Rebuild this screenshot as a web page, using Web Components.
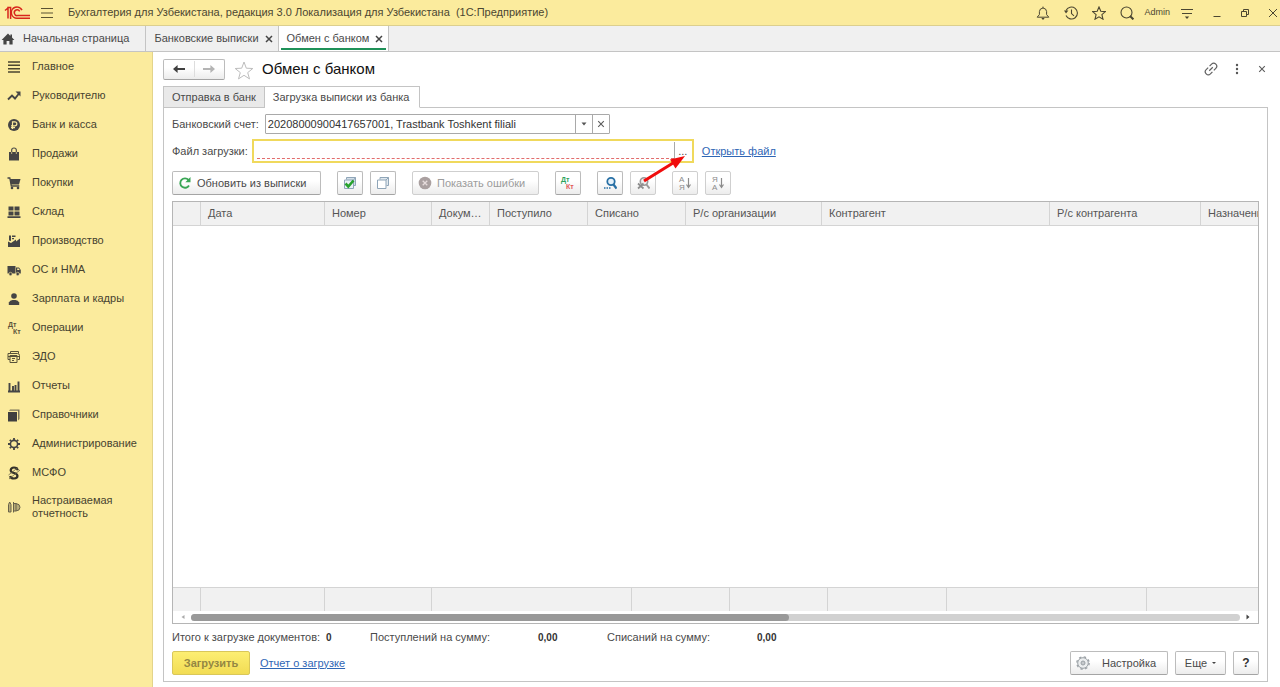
<!DOCTYPE html>
<html lang="ru">
<head>
<meta charset="utf-8">
<title>Обмен с банком</title>
<style>
  html, body { margin: 0; height: 100%; }
  body {
    font: 11px/13px "Liberation Sans", Arial, sans-serif;
    color: #4a4a4a;
    background: #fff;
    --yellow: #fbeb9d;
    --line: #c4c4c4;
    --link: #2f66b5;
  }
</style>
</head>
<body>
<bank-app></bank-app>

<script>
const ICONS = {
  logo: [26, 16, `<g fill="none" stroke="#d8261c" stroke-width="1.5"><path d="M1 5.5L4 3v10.5M3.2 2.5H6.6V14"/><path d="M18 5.2A5.6 5.6 0 1 0 13.5 13.2H26"/><path d="M15.7 6.3A2.9 2.9 0 1 0 13.5 10.6H26"/></g>`],
  burger: [14, 14, `<path d="M1 2.5h12M1 7h12M1 11.5h12" stroke="#5a5233" stroke-width="1.2"/>`],
  bell: [14, 14, `<path d="M1.2 11.2h11.6L10.6 8.6V5.5Q10.4 2.4 7 2 3.6 2.4 3.4 5.5v3.1z" fill="none" stroke="#4b4631" stroke-linejoin="round"/><path d="M7 .6V2" stroke="#4b4631"/><path d="M5.3 12h3.4L7 14z" fill="#4b4631"/>`],
  history: [14, 14, `<path d="M2 4.5A6 6 0 1 1 2 9.6" fill="none" stroke="#4b4631" stroke-width="1.1"/><path d="M0 4.5h4.4L2 7.6z" fill="#4b4631"/><path d="M7.5 3.4V7.6L10 9.8" fill="none" stroke="#4b4631" stroke-width="1.1"/>`],
  star: [14, 14, `<path d="M7 1l1.8 4.3 4.6.3-3.5 3 1.1 4.6L7 10.8l-4 2.4 1.1-4.6-3.5-3 4.6-.3z" fill="none" stroke="#4b4631" stroke-width="1.1"/>`],
  search: [14, 14, `<circle cx="6.5" cy="6.5" r="5.5" fill="none" stroke="#4b4631" stroke-width="1.1"/><path d="M10 10l3.4 3.4" stroke="#4b4631" stroke-width="2"/>`],
  settings: [14, 14, `<path d="M1 3.5h12M2 7.5h10" stroke="#4b4631" stroke-width="1.2"/><path d="M4.8 10.5h4.4L7 13z" fill="#4b4631"/>`],
  minimize: [10, 10, `<path d="M1.5 8.5h7" stroke="#4b4631"/>`],
  restore: [10, 10, `<path d="M1.5 3.5h5v5h-5zM3.5 3.5v-2h5v5h-2" fill="none" stroke="#4b4631"/>`],
  close: [10, 10, `<path d="M1 1l8 8M9 1L1 9" stroke="#4b4631"/>`],
  cross: [8, 8, `<path d="M1 1l6 6M7 1L1 7" stroke="#454545" stroke-width="1.5"/>`],
  thin: [8, 8, `<path d="M1.2 1.2l5.6 5.6M6.8 1.2L1.2 6.8" stroke="#5c5c5c" stroke-width="1.1"/>`],
  home: [14, 14, `<path d="M7 1.5L.6 8h1.8v4.6h3.2V9h2.8v3.6h3.2V8h1.8L11 5.6V2.4H9.4V4z" fill="#454545"/>`],
  back: [14, 10, `<path d="M1 5l4.6-4v2.9H13v2.2H5.6V9z" fill="#404040"/>`],
  forward: [14, 10, `<path d="M13 5L8.4 1v3.1H1v1.8h7.4V9z" fill="#b4b4b4"/>`],
  favorite: [20, 20, `<path d="M10 1l2.3 6.200 6.500.3-5.100 4.100 1.800 6.300L10 14.300l-5.500 3.600 1.800-6.300-5.100-4.100 6.500-.3z" fill="#fff" stroke="#bdbdbd"/>`],
  link: [14, 14, `<g transform="rotate(-45 7 7)" fill="none" stroke="#606060" stroke-width="1.2"><path d="M6 4H3.200a3 3 0 0 0 0 6H6M8 4h2.800a3 3 0 0 1 0 6H8M4.500 7h5"/></g>`],
  dots: [4, 12, `<circle cx="2" cy="2" r="1.2" fill="#555"/><circle cx="2" cy="6" r="1.2" fill="#555"/><circle cx="2" cy="10" r="1.2" fill="#555"/>`],
  down: [6, 4, `<path d="M.5.5h5L3 3.500z" fill="#555"/>`],
  downsmall: [4, 4, `<path d="M0 1h4L2 3z" fill="#444"/>`],
  left: [4, 6, `<path d="M3.500 1v4L.5 3z" fill="#aaa"/>`],
  right: [4, 6, `<path d="M.5.5v5L3.500 3z" fill="#444"/>`],

  main: [14, 14, `<path d="M1 2h12M1 5.300h12M1 8.700h12M1 12h12" stroke="#4b4631" stroke-width="1.6"/>`],
  chart: [14, 14, `<path d="M1 10.500L5 6.500l3 3 4-5" fill="none" stroke="#454545" stroke-width="1.9"/><path d="M8.500 2.500H13.500V7.500z" fill="#454545"/>`],
  ruble: [14, 14, `<circle cx="7" cy="7" r="6" fill="#454545"/><path d="M5.500 11V3.800h2.300a2 2 0 0 1 0 4.100H4M4 9.700h4" fill="none" stroke="#fbeb9d" stroke-width="1.2"/>`],
  bag: [14, 14, `<path d="M2 5h10v8.500H2z" fill="#454545"/><path d="M4.700 7V3Q4.700 1 7 1t2.300 2v4" fill="none" stroke="#454545" stroke-width="1.1"/><path d="M4.700 5v2M9.300 5v2" stroke="#fbeb9d" stroke-width=".7"/>`],
  cart: [14, 14, `<path d="M.5 2h2.300l1.500 8h8" fill="none" stroke="#454545" stroke-width="1.3"/><path d="M3 3h10.500L12 8.500H4z" fill="#454545"/><circle cx="5" cy="12" r="1.3" fill="#454545"/><circle cx="11" cy="12" r="1.3" fill="#454545"/>`],
  stock: [14, 14, `<path d="M1.500 1.500h5v4h-5zM7.500 1.500h5v4h-5zM1.500 6.500h5v4h-5zM7.500 6.500h5v4h-5zM.5 11.300h13v1.700H.5z" fill="#454545"/>`],
  factory: [14, 14, `<path d="M1 13V7.500l3 1.500L9 5.500v2L13 4.500V13z" fill="#454545"/><path d="M2 6.500V1.500h2V7zM5 1.500h3.500V3H5zM5 4h2v1.300H5z" fill="#454545"/>`],
  truck: [14, 14, `<path d="M.5 3h8v7.500h-8zM9 4.500h3L13.800 7v3.500H9z" fill="#454545"/><path d="M10.200 5.500h1.500l1 1.500h-2.500z" fill="#fbeb9d"/><circle cx="3.500" cy="11" r="1.700" fill="#454545" stroke="#fbeb9d" stroke-width=".6"/><circle cx="10.700" cy="11" r="1.700" fill="#454545" stroke="#fbeb9d" stroke-width=".6"/>`],
  person: [14, 14, `<circle cx="7" cy="4" r="2.800" fill="#454545"/><path d="M1.800 13V10.500Q3 8.300 5.500 8h3q2.500.300 3.700 2.500V13z" fill="#454545"/>`],
  dtkt: [16, 14, `<g font-family="Liberation Sans, sans-serif" font-weight="700" font-size="7" fill="#5b553c"><text x="1" y="6">Дт</text><text x="6" y="13">Кт</text></g>`],
  edo: [14, 14, `<g fill="none" stroke="#58523a"><path d="M3.500 3.500v-2h8v2M1 3.500h9.500q2 0 2 2V9.500h-2"/><path d="M3 5.500v7h7v-7zM1 3.500v6h2M1 6.500h12"/></g><path d="M5 8.500h3M5 10.500h2" stroke="#58523a"/>`],
  report: [14, 14, `<path d="M1 12.500h12M2.500 4v8M6 7v5M8.500 6v6M11.500 2.500V12" stroke="#454545" stroke-width="1.9"/>`],
  books: [14, 14, `<path d="M1 4h9v9.500H1z" fill="#3f3f3f"/><path d="M2 2.800l1-1.300h9.500V11L11 12.500V2.800z" fill="#7b755b"/>`],
  gear: [14, 14, `<circle cx="7" cy="7" r="3.600" fill="none" stroke="#454545" stroke-width="1.6"/><path d="M7 1v2M7 11v2M1 7h2M11 7h2M2.800 2.800L4.200 4.200M9.800 9.800l1.400 1.400M2.800 11.200l1.400-1.400M9.800 4.200l1.400-1.400" stroke="#454545" stroke-width="1.8"/>`],
  msfo: [14, 14, `<path d="M10.800 4.200Q10 1.500 7 1.500T3.700 4.200Q3.700 6.300 7 7t3.500 2.800Q10.500 12.500 7 12.500T3.200 10" fill="none" stroke="#33312a" stroke-width="2.2"/><path d="M2 13L13 4M1.500 9L11 1.500" stroke="#6a6449" stroke-width=".8"/>`],
  custom: [14, 14, `<g fill="#b9ad78" stroke="#68624a"><path d="M1.500 12V4.500L2.700 2 4 4.500V12zM6.500 2v10.500M6.500 3.500H9v7.500H6.500M9 3.500q4 .5 4 3.800T9 11"/></g>`],

  refresh: [14, 14, `<path d="M11 9.500A4.700 4.700 0 1 1 10.500 4" fill="none" stroke="#3aa655" stroke-width="1.9"/><path d="M12.500 1v5.200H7.300z" fill="#3aa655"/>`],
  checkall: [14, 14, `<path d="M3.500 3.500v-2h9v8h-2" fill="#d3dfe8" stroke="#8fa5b8"/><path d="M1.500 4h9v8.500h-9z" fill="#eaf1f6" stroke="#8fa5b8"/><path d="M10.500 4l2-2.500" stroke="#8fa5b8"/><path d="M2.500 7.500l2.800 3L10.500 4.500" fill="none" stroke="#27a22d" stroke-width="2.6"/>`],
  uncheck: [14, 14, `<path d="M4 3.500V1.500h8.500v8H10.500" fill="#e0e8ee" stroke="#8fa5b8"/><path d="M1.500 4h8.500v8.500H1.500z" fill="#fff" stroke="#8fa5b8"/><path d="M10 4l2.500-2.500" stroke="#8fa5b8"/>`],
  errors: [14, 14, `<circle cx="7" cy="7" r="6.300" fill="#aaa0a0"/><path d="M4.700 4.700l4.600 4.600M9.300 4.700L4.700 9.300" stroke="#e6dcdc" stroke-width="1.3"/>`],
  dtktcolor: [16, 14, `<g font-family="Liberation Sans, sans-serif" font-weight="700" font-size="7"><text x="1" y="6" fill="#2da25c">Дт</text><text x="6" y="13" fill="#e25757">Кт</text></g>`],
  find: [14, 14, `<circle cx="8" cy="5.500" r="3.700" fill="#e5f1fa" stroke="#2870a5" stroke-width="1.8"/><path d="M10.500 8.500l3 4" stroke="#2870a5" stroke-width="2.2"/><path d="M1 12h1.500M3.500 12H5M6 12h1.500" stroke="#2870a5" stroke-width="1.5"/>`],
  unfind: [14, 14, `<circle cx="8" cy="5.500" r="3.700" fill="#eee" stroke="#999" stroke-width="1.6"/><path d="M10.500 8.500l3 4" stroke="#999" stroke-width="2"/><path d="M2 7.500l5.500 5M7.500 7.500L2 12.500" stroke="#8d8d8d" stroke-width="1.7"/>`],
  sortasc: [14, 16, `<g font-family="Liberation Sans, sans-serif" font-size="8" fill="#8b8b8b"><text x="1" y="7">А</text><text x="1" y="15">Я</text></g><path d="M10.500 3v9M8.500 9.500l2 3 2-3" fill="none" stroke="#8b8b8b" stroke-width="1.2"/>`],
  sortdesc: [14, 16, `<g font-family="Liberation Sans, sans-serif" font-size="8" fill="#8b8b8b"><text x="1" y="7">Я</text><text x="1" y="15">А</text></g><path d="M10.500 3v9M8.500 9.500l2 3 2-3" fill="none" stroke="#8b8b8b" stroke-width="1.2"/>`],
  cog: [14, 14, `<circle cx="7" cy="7" r="5.300" fill="#eceeef" stroke="#9aa0a5"/><circle cx="7" cy="7" r="6.200" fill="none" stroke="#9aa0a5" stroke-width="1.3" stroke-dasharray="2.4 2.47"/><circle cx="7" cy="7" r="2" fill="#c6c9cc" stroke="#9aa0a5"/>`],
  arrow: [44, 30, `<path d="M2 27L31 9" stroke="#f00c0c" stroke-width="3"/><path d="M43 2L28 5.500l5.500 9z" fill="#f00c0c"/>`]
};

class Base extends HTMLElement {
  connectedCallback() {
    if (this.shadowRoot) return;
    this.attachShadow({ mode: "open" }).innerHTML =
      `<style>*{box-sizing:border-box}:host{box-sizing:border-box}button,input{font:inherit;color:inherit;margin:0}a{color:inherit}${this.css()}</style>${this.html()}`;
  }
  attr(name, fallback = "") { return this.getAttribute(name) ?? fallback; }
}
const define = (name, css, html) =>
  customElements.define(name, class extends Base {
    css() { return css; }
    html() { return html(this); }
  });

define("ui-icon", `:host{display:block;flex:none}svg{display:block}`, el => {
  const [w, h, body] = ICONS[el.attr("name")];
  return `<svg width="${w}" height="${h}" viewBox="0 0 ${w} ${h}" aria-hidden="true">${body}</svg>`;
});

define("icon-button", `
  :host{display:block;flex:none}
  button{display:grid;place-items:center;width:100%;height:16px;padding:0;border:0;background:none}
`, el => `<button type="button" aria-label="${el.attr("label")}"><ui-icon name="${el.attr("icon")}"></ui-icon></button>`);

define("tool-button", `
  :host{display:block;flex:none}
  button{display:flex;align-items:center;justify-content:center;gap:5px;width:100%;height:24px;padding:0 8px;
    border:1px solid #bcbcbc;border-bottom-color:#a4a4a4;border-radius:2px;background:linear-gradient(#fff 40%,#ececec);
    color:#4a4a4a;white-space:nowrap}
  :host([icon]) button{padding:0 4px}
  :host([text]) button{justify-content:flex-start;padding:0 4px 0 5px}
  :host([spread]) button{gap:12px}
  :host([muted]) button{color:#9c9c9c;border-color:#cfcfcf}
  :host([primary]) button{font-weight:700;color:#948743;border-color:#d9c75a;background:linear-gradient(#fdee72,#f2dc54)}
`, el => {
  const label = el.hasAttribute("label") ? ` aria-label="${el.attr("label")}"` : "";
  const icon = el.hasAttribute("icon") ? `<ui-icon name="${el.attr("icon")}"></ui-icon>` : "";
  return `<button type="button"${label}${el.hasAttribute("muted") ? " disabled" : ""}>${icon}<slot></slot></button>`;
});

define("app-header", `
  :host{display:flex;align-items:center;height:26px;padding:0 2px 0 4px;background:var(--yellow);border-bottom:1px solid #dccf8e;color:#4b4631}
  .burger{width:14px;margin:0 14px 0 10px}
  h1{flex:1;margin:0;font:inherit;white-space:pre;overflow:hidden}
  .tools{display:flex;align-items:center;gap:14px}
  .tools icon-button{width:14px}
  .user{font-size:9px;margin:0 -4px}
  .win{display:flex;gap:18px;margin-left:18px}
  .win icon-button{width:10px}
`, () => `
  <ui-icon name="logo"></ui-icon>
  <icon-button class="burger" icon="burger" label="Меню"></icon-button>
  <h1>Бухгалтерия для Узбекистана, редакция 3.0 Локализация для Узбекистана  (1С:Предприятие)</h1>
  <div class="tools">
    <icon-button icon="bell" label="Уведомления"></icon-button>
    <icon-button icon="history" label="История"></icon-button>
    <icon-button icon="star" label="Избранное"></icon-button>
    <icon-button icon="search" label="Поиск"></icon-button>
    <span class="user">Admin</span>
    <icon-button icon="settings" label="Настройки"></icon-button>
  </div>
  <div class="win">
    <icon-button icon="minimize" label="Свернуть"></icon-button>
    <icon-button icon="restore" label="Восстановить"></icon-button>
    <icon-button icon="close" label="Закрыть"></icon-button>
  </div>`);

define("window-tab", `
  :host{display:flex;align-items:center;gap:6px;padding:0 5px 0 8px;border-right:1px solid var(--line);white-space:nowrap}
  :host([home]){gap:8px;padding:0 16px 0 1px}
  :host([active]){position:relative;background:#fff}
  :host([active])::after{content:"";position:absolute;left:2px;right:2px;bottom:1px;height:2px;background:#1f9158}
  a{text-decoration:none}
  icon-button{width:8px}
`, el => `${el.hasAttribute("home") ? `<ui-icon name="home"></ui-icon>` : ""}<a href="#"><slot></slot></a>${el.hasAttribute("home") ? "" : `<icon-button icon="cross" label="Закрыть вкладку"></icon-button>`}`);

define("window-tabs", `
  :host{display:flex;height:26px;background:#f0f0f0;border-bottom:1px solid var(--line)}
`, () => `
  <window-tab home>Начальная страница</window-tab>
  <window-tab>Банковские выписки</window-tab>
  <window-tab active>Обмен с банком</window-tab>`);

define("nav-item", `
  :host{display:block}
  a{display:flex;align-items:center;gap:10px;min-height:29px;padding:0 16px 0 7px;text-decoration:none;color:#474330}
  :host([tall]) a{min-height:40px}
  ui-icon{width:15px}
`, el => `<a href="#"><ui-icon name="${el.attr("icon")}"></ui-icon><span><slot></slot></span></a>`);

define("nav-menu", `
  :host{display:block;background:var(--yellow);border-right:1px solid #e3d48b}
`, () => `<nav>${[
  ["main", "Главное"], ["chart", "Руководителю"], ["ruble", "Банк и касса"], ["bag", "Продажи"],
  ["cart", "Покупки"], ["stock", "Склад"], ["factory", "Производство"], ["truck", "ОС и НМА"],
  ["person", "Зарплата и кадры"], ["dtkt", "Операции"], ["edo", "ЭДО"], ["report", "Отчеты"],
  ["books", "Справочники"], ["gear", "Администрирование"], ["msfo", "МСФО"]
].map(([i, t]) => `<nav-item icon="${i}">${t}</nav-item>`).join("")}<nav-item tall icon="custom">Настраиваемая отчетность</nav-item></nav>`);

define("form-head", `
  :host{display:flex;align-items:center;height:34px}
  .nav{display:flex;width:62px;height:21px;border:1px solid #bcbcbc;border-bottom-color:#a4a4a4;border-radius:2px;background:linear-gradient(#fff 40%,#ececec)}
  .nav icon-button{flex:1;align-self:center}
  .nav icon-button + icon-button{border-left:1px solid #ddd}
  .fav{width:20px;margin:0 8px 0 9px}
  h2{flex:1;margin:0;font-size:15px;line-height:20px;font-weight:400;color:#111}
  .end{display:flex;gap:13px;align-items:center}
  .end icon-button{width:12px}
  .end .link{width:14px}
`, () => `
  <div class="nav"><icon-button icon="back" label="Назад"></icon-button><icon-button icon="forward" label="Вперед"></icon-button></div>
  <icon-button class="fav" icon="favorite" label="В избранное"></icon-button>
  <h2>Обмен с банком</h2>
  <div class="end">
    <icon-button class="link" icon="link" label="Ссылка"></icon-button>
    <icon-button icon="dots" label="Еще"></icon-button>
    <icon-button icon="thin" label="Закрыть"></icon-button>
  </div>`);

define("page-tabs", `
  :host{display:flex;position:relative;margin-bottom:-1px}
  button{height:22px;padding:0 8px;border:1px solid var(--line);border-radius:0;background:#e9e9e9}
  button + button{padding-right:10px;border-left:0;border-bottom-color:#fff;background:#fff}
`, () => `<button type="button">Отправка в банк</button><button type="button">Загрузка выписки из банка</button>`);

define("account-field", `
  :host{display:flex;align-items:center;gap:6px}
  .box{display:flex;width:345px;height:20px;border:1px solid #a9a9a9;border-radius:1px}
  input{flex:1;min-width:0;padding:0 2px;border:0;color:#333;background:none}
  icon-button{width:17px;border-left:1px solid #a9a9a9;display:grid;align-items:center}
`, () => `
  <label for="account">Банковский счет:</label>
  <div class="box">
    <input id="account" value="20208000900417657001, Trastbank Toshkent filiali">
    <icon-button icon="down" label="Выбрать"></icon-button>
    <icon-button icon="thin" label="Очистить"></icon-button>
  </div>`);

define("file-field", `
  :host{display:flex;align-items:center;gap:4px}
  .box{position:relative;display:flex;width:442px;height:24px;padding:1px;border:2px solid #f0d95c}
  .line{flex:1;display:flex;margin:0 0 1px 2px;border-bottom:1px dashed #e26d6d}
  input{flex:1;min-width:0;padding:0;border:0;background:none;outline:0}
  button{width:17px;padding:0;border:0;border-left:1px solid #a9a9a9;background:none}
  .pointer{position:absolute;right:6px;top:13px}
  a{margin-left:4px;color:var(--link)}
`, () => `
  <label for="file">Файл загрузки:</label>
  <div class="box">
    <span class="line"><input id="file"></span>
    <button type="button" aria-label="Выбрать файл">...</button>
    <ui-icon class="pointer" name="arrow"></ui-icon>
  </div>
  <a href="#">Открыть файл</a>`);

define("tool-bar", `
  :host{display:flex;gap:16px}
  div{display:flex;gap:7px}
  tool-button{width:26px}
  .refresh{width:149px}
  .errors{width:127px}
`, () => `
  <tool-button class="refresh" text icon="refresh">Обновить из выписки</tool-button>
  <div><tool-button icon="checkall" label="Установить флажки"></tool-button><tool-button icon="uncheck" label="Снять флажки"></tool-button></div>
  <tool-button class="errors" text muted icon="errors">Показать ошибки</tool-button>
  <tool-button icon="dtktcolor" label="Проводки"></tool-button>
  <div><tool-button icon="find" label="Найти"></tool-button><tool-button muted icon="unfind" label="Отменить поиск"></tool-button></div>
  <div><tool-button muted icon="sortasc" label="По возрастанию"></tool-button><tool-button muted icon="sortdesc" label="По убыванию"></tool-button></div>`);

define("statement-table", `
  :host{display:flex;flex-direction:column;border:1px solid #b5b5b5;overflow:hidden}
  table{flex:1;display:flex;flex-direction:column}
  tbody{flex:1}
  thead,tbody,tfoot{display:block}
  tr{display:grid;background:#f1f1f1}
  thead tr{grid-template-columns:28px 124px 107px 58px 98px 98px 136px 228px 151px minmax(0,1fr);height:24px;border-bottom:1px solid #d4d4d4}
  tfoot tr{grid-template-columns:28px 124px 107px 200px 98px 98px 119px 200px minmax(0,1fr);height:24px;border-top:1px solid #d4d4d4}
  th,td{display:block;padding:0;border-right:1px solid #d4d4d4}
  th{padding:0 6px 0 7px;font-weight:400;line-height:22px;text-align:left;white-space:nowrap;overflow:hidden;text-overflow:ellipsis;color:#555}
  th:last-child,td:last-child{border-right:0;text-overflow:clip;padding-right:0}
  .scroll{display:flex;align-items:center;gap:6px;height:12px;padding:0 8px}
  .track{flex:1;height:7px;border-radius:4px;background:#d1d1d1}
  .thumb{width:57%;height:7px;border-radius:4px;background:#999}
`, () => `
  <table>
    <thead><tr>${["", "Дата", "Номер", "Документ", "Поступило", "Списано", "Р/с организации", "Контрагент", "Р/с контрагента", "Назначение платежа"].map(t => `<th scope="col">${t}</th>`).join("")}</tr></thead>
    <tbody></tbody>
    <tfoot><tr>${"<td></td>".repeat(9)}</tr></tfoot>
  </table>
  <div class="scroll"><ui-icon name="left"></ui-icon><div class="track"><div class="thumb"></div></div><ui-icon name="right"></ui-icon></div>`);

define("total-row", `
  :host{display:flex}
  p{display:flex;gap:6px;margin:0;flex:none}
  .count{width:198px}
  .income{width:237px}
  .income span{width:162px}
  .expense span{width:144px}
  b{font-size:10px;color:#333}
`, () => `
  <p class="count"><span>Итого к загрузке документов:</span><b>0</b></p>
  <p class="income"><span>Поступлений на сумму:</span><b>0,00</b></p>
  <p class="expense"><span>Списаний на сумму:</span><b>0,00</b></p>`);

define("form-footer", `
  :host{display:flex;align-items:center;gap:7px}
  a{margin:0 auto 0 3px;color:var(--link)}
  .load{width:78px}.setup{width:98px}.more{width:51px}.help{width:26px}
  b{font-size:12px;color:#333}
`, () => `
  <tool-button class="load" primary>Загрузить</tool-button>
  <a href="#">Отчет о загрузке</a>
  <tool-button class="setup" text spread icon="cog">Настройка</tool-button>
  <tool-button class="more">Еще <ui-icon name="downsmall"></ui-icon></tool-button>
  <tool-button class="help"><b>?</b></tool-button>`);

define("bank-form", `
  :host{display:flex;flex-direction:column;min-width:0;padding:0 12px 5px 10px}
  .panel{flex:1;display:flex;flex-direction:column;padding:6px 8px 6px;border:1px solid var(--line)}
  file-field{margin-top:5px}
  tool-bar{margin-top:8px}
  statement-table{flex:1;margin-top:6px}
  total-row{margin-top:7px}
  form-footer{margin-top:7px}
`, () => `
  <form-head></form-head>
  <page-tabs></page-tabs>
  <div class="panel">
    <account-field></account-field>
    <file-field></file-field>
    <tool-bar></tool-bar>
    <statement-table></statement-table>
    <total-row></total-row>
    <form-footer></form-footer>
  </div>`);

define("bank-app", `
  :host{display:flex;flex-direction:column;min-height:100vh}
  main{flex:1;display:grid;grid-template-columns:153px minmax(0,1fr)}
`, () => `
  <app-header></app-header>
  <window-tabs></window-tabs>
  <main><nav-menu></nav-menu><bank-form></bank-form></main>`);
</script>
</body>
</html>
